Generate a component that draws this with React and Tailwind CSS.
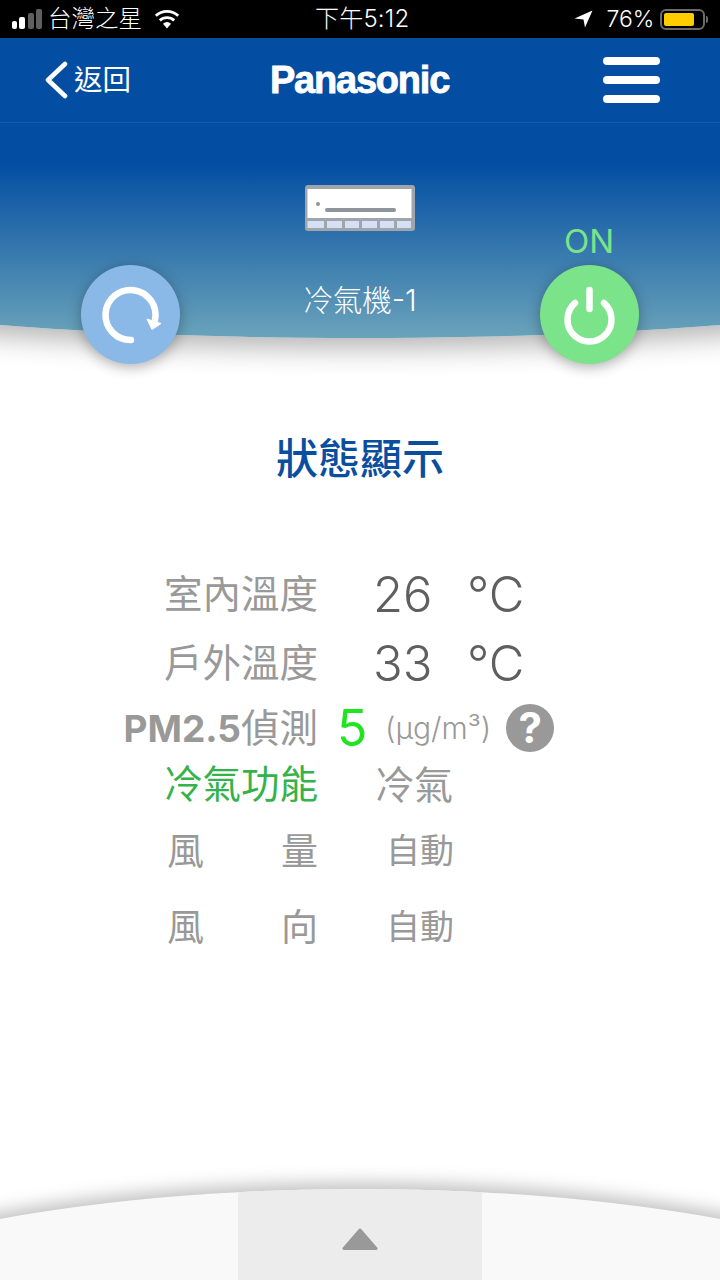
const sans = "font-['Inter','Noto_Sans_CJK_TC',sans-serif]";

function Signal() {
  return (
    <div className="flex items-end gap-[2.5px] h-[20px] w-[30px]">
      <div className="w-[5px] h-[8px] rounded-[2px] bg-white" />
      <div className="w-[6px] h-[12px] rounded-[2px] bg-white" />
      <div className="w-[6px] h-[16px] rounded-[2px] bg-[#5f5f5f]" />
      <div className="w-[6px] h-[20px] rounded-[2px] bg-[#5f5f5f]" />
    </div>
  );
}

function Wifi() {
  return (
    <svg width="26" height="20" viewBox="0 0 26 20">
      <path d="M13 19.5 L9 14.8 A6.2 6.2 0 0 1 17 14.8 Z" fill="#fff" />
      <path d="M5.8 11.4 A10.6 10.6 0 0 1 20.2 11.4" stroke="#fff" strokeWidth="2.8" fill="none" />
      <path d="M1.8 6.8 A16.4 16.4 0 0 1 24.2 6.8" stroke="#fff" strokeWidth="2.8" fill="none" />
    </svg>
  );
}

function AcIcon() {
  const slats = [
    [2.5, 16.5],
    [22, 15],
    [40, 14],
    [57, 15],
    [75, 14],
    [92, 14],
  ];
  return (
    <svg width="110" height="47" viewBox="0 0 110 47">
      <rect x="0" y="0" width="110" height="46" rx="3" fill="#a0a4ab" />
      <rect x="2.5" y="4" width="104" height="29" fill="#fff" />
      <circle cx="13" cy="19" r="2" fill="#8f959c" />
      <rect x="20" y="23" width="71" height="4" rx="2" fill="#8f959c" />
      {slats.map(([x, w]) => (
        <rect key={x} x={x} y="36" width={w} height="7" fill="#d5e0f5" />
      ))}
    </svg>
  );
}

function RoundButton({ color, children, className }) {
  return (
    <div className={`absolute top-[227px] w-[99px] h-[99px] rounded-full flex items-center justify-center shadow-[0_3px_14px_rgba(0,0,0,0.3)] ${color} ${className}`}>
      {children}
    </div>
  );
}

function Label({ children, className = "text-[#999999]" }) {
  return <div className={`w-[318px] text-right text-[38.5px] leading-none ${className}`}>{children}</div>;
}

function Spread({ a, b, y }) {
  return (
    <div className={`flex items-center text-[#999999] ${y}`}>
      <div className="ml-[167px] w-[151px] flex justify-between text-[37px] leading-none">
        <span>{a}</span>
        <span>{b}</span>
      </div>
      <div className="ml-[68px] text-[34px] leading-none">自動</div>
    </div>
  );
}

export default function App() {
  return (
    <div className={`w-[720px] h-[1280px] bg-white overflow-hidden flex flex-col ${sans}`}>
      <div className="h-[38px] bg-black text-white flex items-center relative z-10 shrink-0">
        <div className="ml-[12px]"><Signal /></div>
        <div className="ml-[6px] text-[23.5px] leading-none font-light">台灣之星</div>
        <div className="ml-[12px]"><Wifi /></div>
        <div className="ml-[135px] text-[24px] leading-none font-light tracking-[0.2px]">下午5:12</div>
        <svg className="ml-[165px]" width="19" height="18" viewBox="0 0 19 18">
          <path d="M0.5 8.5 L18.5 0.5 L11 17.5 L9.5 9.5 Z" fill="#fff" />
        </svg>
        <div className="ml-[13px] text-[23px] leading-none font-light">76%</div>
        <div className="ml-[6px] w-[45px] h-[21px] rounded-[6px] border-2 border-[#6b6b6b] p-[2px]">
          <div className="w-[30px] h-full rounded-[2px] bg-[#ffcc00]" />
        </div>
        <div className="ml-[1px] w-[2px] h-[7px] rounded-r bg-[#6b6b6b]" />
      </div>

      <div className="relative -mx-[240px] px-[240px] h-[300px] shrink-0 rounded-bl-[600px_65px] rounded-br-[600px_65px] bg-[linear-gradient(180deg,#034ea2_0%,#034ea2_42%,#6aa3ba_100%)] shadow-[0_10px_28px_rgba(0,0,0,0.3)]">
        <div className="h-[85px] border-b border-[#1a5ca9] flex items-center text-white">
          <svg className="ml-[44px]" width="26" height="38" viewBox="0 0 26 38">
            <path d="M21 3 L4 19 L21 35" stroke="#fff" strokeWidth="4.6" strokeLinecap="round" strokeLinejoin="round" fill="none" />
          </svg>
          <div className="ml-[4px] text-[28.5px] leading-none">返回</div>
          <div className="ml-[137px] w-[183px] font-['Liberation_Sans',sans-serif] font-bold text-[38px] leading-none tracking-[-1.2px] [-webkit-text-stroke:0.8px_white] text-center">Panasonic</div>
          <div className="ml-[152px] w-[57px] flex flex-col gap-[11px]">
            <div className="h-[8px] rounded-full bg-white" />
            <div className="h-[8px] rounded-full bg-white" />
            <div className="h-[8px] rounded-full bg-white" />
          </div>
        </div>
        <div className="flex flex-col items-center text-white">
          <div className="mt-[62px]"><AcIcon /></div>
          <div className="mt-[48px] text-[29.5px] leading-[40px] font-light">冷氣機-1</div>
        </div>
        <RoundButton color="bg-[#8ab9e8]" className="left-[321px]">
          <svg width="99" height="99" viewBox="0 0 99 99">
            <path d="M50 75 A25 25 0 1 1 74 55" stroke="#fff" strokeWidth="6.5" strokeLinecap="round" fill="none" />
            <path d="M66 54 L80 58.5 L71 64.5 Z" fill="#fff" stroke="#fff" strokeWidth="1" strokeLinejoin="round" />
          </svg>
        </RoundButton>
        <div className="absolute top-[183px] left-[804px] text-[33px] leading-[40px] text-[#7be38a]">ON</div>
        <RoundButton color="bg-[#7be38a]" className="left-[780px]">
          <svg width="99" height="99" viewBox="0 0 99 99">
            <path d="M35 38 A22 22 0 1 0 64 38" stroke="#fff" strokeWidth="6.5" strokeLinecap="round" fill="none" />
            <path d="M49.5 25 L49.5 44" stroke="#fff" strokeWidth="6.5" strokeLinecap="round" fill="none" />
          </svg>
        </RoundButton>
      </div>

      <h1 className="mt-[97px] text-center text-[42px] leading-[48px] font-medium text-[#0a4f9e]">狀態顯示</h1>

      <div className="mt-[77px] flex flex-col">
        <div className="h-[69px] flex items-center">
          <Label>室內溫度</Label>
          <div className="ml-[55px] w-[94px] text-[49px] leading-none font-light text-[#5f5f5f]">26</div>
          <div className="text-[49px] leading-none font-light text-[#5f5f5f]">°C</div>
        </div>
        <div className="h-[69px] flex items-center">
          <Label>戶外溫度</Label>
          <div className="ml-[55px] w-[94px] text-[49px] leading-none font-light text-[#5f5f5f]">33</div>
          <div className="text-[49px] leading-none font-light text-[#5f5f5f]">°C</div>
        </div>
        <div className="h-[60px] flex items-center">
          <Label><span className="font-bold text-[37px]">PM2.5</span>偵測</Label>
          <div className="ml-[19px] w-[48px] text-[50px] leading-none text-[#1fe51f]">5</div>
          <div className="text-[30px] leading-none font-light text-[#999999]">(µg/m³)</div>
          <div className="ml-[15px] w-[48px] h-[48px] rounded-full bg-[#999999] flex items-center justify-center text-white font-bold text-[42px] leading-none">?</div>
        </div>
        <div className="h-[52px] flex items-center">
          <Label className="text-[#35b34a]">冷氣功能</Label>
          <div className="ml-[57px] text-[39px] leading-none text-[#999999]">冷氣</div>
        </div>
        <Spread a="風" b="量" y="h-[82px]" />
        <Spread a="風" b="向" y="h-[70px]" />
      </div>

      <div className="mt-auto -mx-[240px] -mb-[60px] h-[151px] shrink-0 rounded-tl-[600px_150px] rounded-tr-[600px_150px] bg-[#f9f9f9] shadow-[0_-6px_18px_rgba(0,0,0,0.25)] overflow-hidden flex justify-center">
        <div className="w-[244px] h-full bg-[#ececec] flex justify-center pt-[39px]">
          <svg width="36" height="23" viewBox="0 0 36 23">
            <path d="M18 2 L34 20.5 L2 20.5 Z" fill="#999" stroke="#999" strokeWidth="3" strokeLinejoin="round" />
          </svg>
        </div>
      </div>
    </div>
  );
}
